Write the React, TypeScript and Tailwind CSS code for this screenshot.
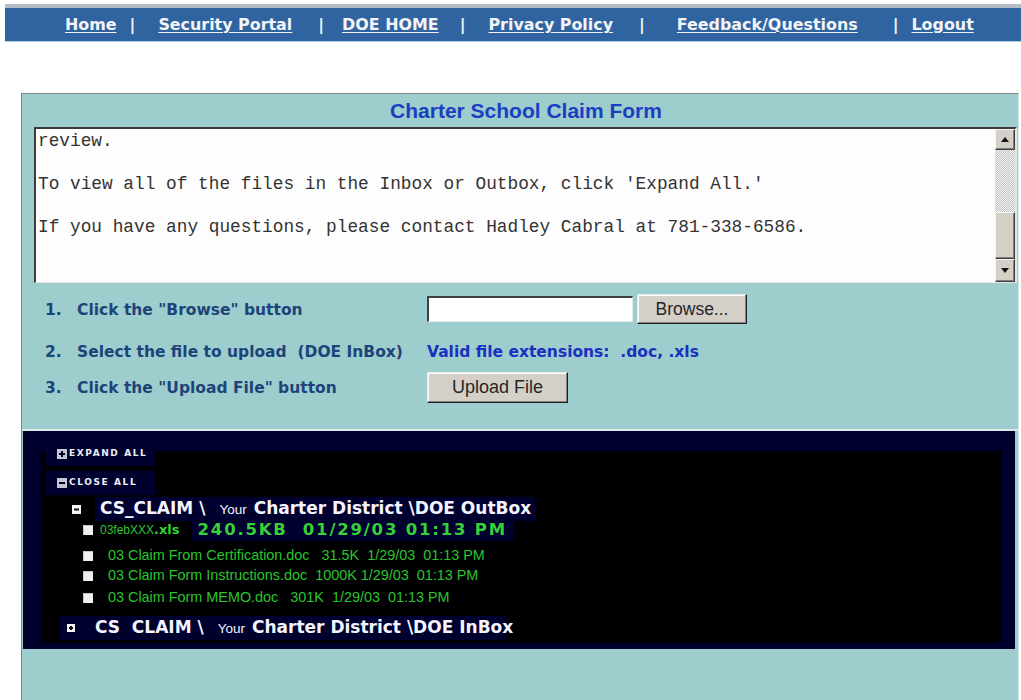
import type { ReactNode } from "react";

const verdana = "font-['DejaVu_Sans',Verdana,sans-serif]";
const arial = "font-['Liberation_Sans',Arial,sans-serif]";
const courier = "font-['Liberation_Mono','Courier_New',monospace]";

const notice = `review.

To view all of the files in the Inbox or Outbox, click 'Expand All.'

If you have any questions, please contact Hadley Cabral at 781-338-6586.`;

const docFiles = [
  "03 Claim From Certification.doc   31.5K  1/29/03  01:13 PM",
  "03 Claim Form Instructions.doc  1000K 1/29/03  01:13 PM",
  "03 Claim Form MEMO.doc   301K  1/29/03  01:13 PM",
];

function NavLink({ children, className = "" }: { children: ReactNode; className?: string }) {
  return (
    <a href="#" className={`underline underline-offset-2 decoration-1 ${className}`}>
      {children}
    </a>
  );
}

function Sep({ className = "" }: { className?: string }) {
  return <span className={className}>|</span>;
}

function TopNav() {
  return (
    <div className="ml-[5px] mt-[4px] border-t-4 border-[#b4bcc6] bg-[#3064a0] border-b border-b-[#a9cfe6]">
      <nav
        className={`${verdana} flex h-[33px] items-center pl-[60px] text-[15.9px] font-bold text-[#f2f4f8]`}
      >
        <NavLink>Home</NavLink>
        <Sep className="ml-[13px]" />
        <NavLink className="ml-[23px]">Security Portal</NavLink>
        <Sep className="ml-[26px]" />
        <NavLink className="ml-[18px]">DOE HOME</NavLink>
        <Sep className="ml-[21px]" />
        <NavLink className="ml-[23px]">Privacy Policy</NavLink>
        <Sep className="ml-[26px]" />
        <NavLink className="ml-[32px]">Feedback/Questions</NavLink>
        <Sep className="ml-[35px]" />
        <NavLink className="ml-[13px]">Logout</NavLink>
      </nav>
    </div>
  );
}

function Arrow({ up }: { up?: boolean }) {
  return (
    <svg width="8" height="5" viewBox="0 0 8 5">
      <path d={up ? "M0 5 L4 0 L8 5 Z" : "M0 0 L4 5 L8 0 Z"} fill="#111" />
    </svg>
  );
}

function ScrollButton({ up, className = "" }: { up?: boolean; className?: string }) {
  return (
    <div
      className={`flex items-center justify-center bg-[#d4d0c8] border border-t-[#f4f4f4] border-l-[#f4f4f4] border-r-[#404040] border-b-[#404040] shadow-[inset_-1px_-1px_0_#808080] ${className}`}
    >
      <Arrow up={up} />
    </div>
  );
}

function NoticeBox() {
  return (
    <div className="ml-[12px] mr-[1px] flex h-[156px] border-t-2 border-l-2 border-t-[#3c3c3c] border-l-[#3c3c3c] border-b border-r-2 border-b-[#e4e4e4] border-r-[#e4e4e4] bg-[#fdfdfd]">
      <div
        className={`${courier} flex-1 whitespace-pre pl-[2px] pt-[2px] text-[17.8px] leading-[21.5px] text-[#333333]`}
      >
        {notice}
      </div>
      <div className="flex w-[20px] flex-col">
        <ScrollButton up className="h-[21px]" />
        <div className="h-[62px] bg-[repeating-conic-gradient(#f4f4f4_0_25%,#c4c4c4_0_50%)] bg-[length:2px_2px]" />
        <div className="h-[47px] bg-[#d4d0c8] border border-t-[#f4f4f4] border-l-[#f4f4f4] border-r-[#404040] border-b-[#404040] shadow-[inset_-1px_-1px_0_#808080]" />
        <ScrollButton className="flex-1" />
      </div>
    </div>
  );
}

function StepLabel({ n, children, className = "" }: { n: string; children: ReactNode; className?: string }) {
  return (
    <div
      className={`${verdana} flex w-[382px] shrink-0 whitespace-pre text-[15.5px] font-bold text-[#1d4479] ${className}`}
    >
      <span className="w-[32px]">{n}</span>
      <span>{children}</span>
    </div>
  );
}

function WinButton({ children, className = "" }: { children: ReactNode; className?: string }) {
  return (
    <button
      className={`${arial} flex items-center justify-center bg-[#d4d0c8] text-[#262626] border border-t-[#e8e8e8] border-l-[#e8e8e8] border-r-[#202020] border-b-[#202020] shadow-[inset_-1px_-1px_0_#808080,inset_1px_1px_0_#ffffff] ${className}`}
    >
      {children}
    </button>
  );
}

function UploadSteps() {
  return (
    <div className="flex flex-col pl-[23px] pb-[26px]">
      <div className="mt-[11px] flex h-[30px] items-center">
        <StepLabel n="1." className="pt-[4px]">Click the "Browse" button</StepLabel>
        <div className="h-[26px] w-[206px] border-t-2 border-l-2 border-t-[#404040] border-l-[#404040] border-b border-r border-b-[#e8e8e8] border-r-[#e8e8e8] bg-white" />
        <WinButton className="ml-[4px] h-[30px] w-[110px] text-[17.5px]">Browse...</WinButton>
      </div>
      <div className="mt-[19px] flex h-[20px] items-center">
        <StepLabel n="2.">Select the file to upload  (DOE InBox)</StepLabel>
        <span className={`${verdana} whitespace-pre text-[15.5px] font-bold text-[#1b2fc0]`}>
          Valid file extensions:  .doc, .xls
        </span>
      </div>
      <div className="mt-[9px] flex h-[31px] items-center">
        <StepLabel n="3." className="pt-[3px]">Click the "Upload File" button</StepLabel>
        <WinButton className="h-[31px] w-[141px] text-[18px]">Upload File</WinButton>
      </div>
    </div>
  );
}

function BoxIcon({ minus, size = 9, fill = "#f2f2f2", stroke = "#111" }: { minus?: boolean; size?: number; fill?: string; stroke?: string }) {
  const m = size / 2;
  return (
    <svg width={size} height={size} viewBox={`0 0 ${size} ${size}`} className="shrink-0">
      <rect width={size} height={size} fill={fill} />
      <path d={`M2 ${m} H${size - 2}`} stroke={stroke} strokeWidth="2" />
      {!minus && <path d={`M${m} 2 V${size - 2}`} stroke={stroke} strokeWidth="2" />}
    </svg>
  );
}

function Checkbox() {
  return <span className="h-[10px] w-[10px] shrink-0 bg-[#f0f0f0] shadow-[inset_1px_1px_0_#c8c8c8]" />;
}

function FolderLine({ prefix, box }: { prefix: string; box: string }) {
  return (
    <span className={`${verdana} whitespace-pre text-[17px] font-bold text-[#f4f4ff]`}>
      {prefix}
      <span className={`${arial} ml-[14px] mr-[7px] text-[13.5px] font-normal`}>Your</span>
      {`Charter District \\DOE ${box}`}
    </span>
  );
}

function TreeToggle({ label, minus, className = "" }: { label: string; minus?: boolean; className?: string }) {
  return (
    <div className={`ml-[22px] flex h-[24px] w-[110px] items-center bg-[#00002e] pl-[12px] ${className}`}>
      <BoxIcon minus={minus} size={10} fill="#c6c6d2" stroke="#00002e" />
      <span className={`${verdana} ml-[2px] text-[9px] font-black tracking-[1.6px] text-[#eceef8]`}>
        {label}
      </span>
    </div>
  );
}

function FileTree() {
  return (
    <div className="relative ml-[1px] mr-[3px] h-[218px] bg-[#00002e]">
      <div className="absolute left-[18px] right-[13px] top-[20px] bottom-[6px] bg-[#000003]" />
      <div className="relative flex flex-col pt-[11px]">
        <TreeToggle label="EXPAND ALL" />
        <TreeToggle label="CLOSE ALL" minus className="mt-[5px]" />
        <div className="ml-[49px] mt-[2px] flex h-[24px] items-center">
          <BoxIcon minus />
          <div className="ml-[14px] flex h-full items-center bg-[#00002e] pl-[5px] pr-[4px]">
            <FolderLine prefix="CS_CLAIM \" box="OutBox" />
          </div>
        </div>
        <div className="ml-[60px] flex h-[18px] items-center">
          <Checkbox />
          <span className={`${arial} ml-[7px] text-[12px] text-[#2fc42f]`}>03febXXX</span>
          <span className={`${verdana} text-[13px] font-bold text-[#36d236]`}>.xls</span>
          <span
            className={`${verdana} ml-[12px] flex h-[22px] items-center whitespace-pre bg-[#00002e] pl-[6px] pr-[6px] text-[16.5px] font-bold tracking-[1.8px] text-[#38d038]`}
          >
            240.5KB  01/29/03 01:13 PM
          </span>
        </div>
        <div className="mt-[7px] flex flex-col">
          {docFiles.map((f, i) => (
            <div key={f} className={`ml-[60px] flex h-[20px] items-center ${i === 2 ? "mt-[2px]" : ""}`}>
              <Checkbox />
              <span className={`${arial} ml-[15px] whitespace-pre text-[14.4px] text-[#2bc42b]`}>{f}</span>
            </div>
          ))}
        </div>
        <div className="ml-[37px] mt-[8px] flex h-[24px] w-[445px] items-center bg-[#00002e] pl-[7px]">
          <BoxIcon size={8} />
          <div className="ml-[20px]">
            <FolderLine prefix="CS  CLAIM \" box="InBox" />
          </div>
        </div>
      </div>
    </div>
  );
}

export default function App() {
  return (
    <div className="min-h-[700px] bg-white">
      <TopNav />
      <div className="ml-[21px] mt-[51px] w-[998px] border-t border-l border-r border-t-[#7c8888] border-l-[#7c8888] border-r-[#d8e4e4] bg-[#9dcdcd]">
        <div className="ml-[12px] flex h-[33px] items-center justify-center">
          <h1 className={`${arial} text-[21px] font-bold text-[#1b3ec2]`}>Charter School Claim Form</h1>
        </div>
        <NoticeBox />
        <UploadSteps />
        <div className="h-[2px] bg-[#dce8e8]" />
        <FileTree />
        <div className="h-[70px]" />
      </div>
    </div>
  );
}
